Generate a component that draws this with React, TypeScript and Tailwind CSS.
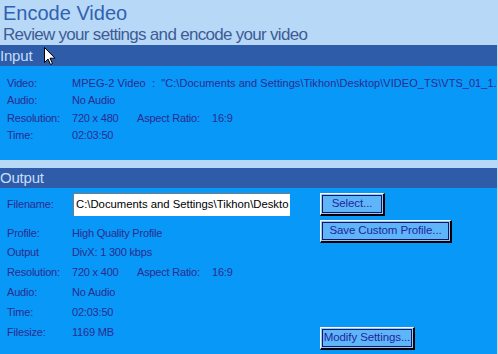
const FONT = { fontFamily: '"Liberation Sans", Arial, sans-serif' }

function Row({ label, value, extra }: { label: string; value: string; extra?: [string, string] }) {
  return (
    <div className="flex h-[19.8px] items-center whitespace-nowrap text-[11px] tracking-[-0.2px] text-[#2b2b8f]">
      <span className="w-[72px] shrink-0 pl-[7px]">{label}</span>
      <span className={extra ? 'w-[65px] shrink-0' : ''}>{value}</span>
      {extra && (
        <>
          <span className="w-[75px] shrink-0">{extra[0]}</span>
          <span>{extra[1]}</span>
        </>
      )}
    </div>
  )
}

function InRow({ label, value, extra, wide }: { label: string; value: string; extra?: [string, string]; wide?: boolean }) {
  return (
    <div className="flex h-[17.5px] items-center whitespace-pre text-[11px] tracking-[-0.2px] text-[#2b2b8f]">
      <span className="w-[72px] shrink-0 pl-[7px]">{label}</span>
      <span className={extra ? 'w-[65px] shrink-0' : wide ? 'tracking-[0.05px]' : ''}>{value}</span>
      {extra && (
        <>
          <span className="w-[75px] shrink-0">{extra[0]}</span>
          <span>{extra[1]}</span>
        </>
      )}
    </div>
  )
}

function Btn({ label, w }: { label: string; w: string }) {
  return (
    <div className={`${w} h-[23px] border-t border-l border-r-2 border-b-2 border-t-white border-l-white border-r-black border-b-black bg-[#8ccaf8] p-[1px]`}>
      <div className="flex h-full items-center justify-center border border-[#14146a] bg-[#5eb6f8] text-[11.5px] tracking-[-0.1px] text-[#2424a0]">
        {label}
      </div>
    </div>
  )
}

export default function App() {
  return (
    <div style={FONT} className="relative h-[354px] w-[498px] overflow-hidden bg-[#b8d8f8]">
      {/* Title */}
      <div className="h-[45px] pl-[3px] pt-[1px]">
        <div className="text-[20px] leading-[24px] text-[#3062b0]">Encode Video</div>
        <div className="text-[17px] leading-[19px] tracking-[-0.7px] text-[#3e5c94]">
          Review your settings and encode your video
        </div>
      </div>

      {/* Input */}
      <div className="w-[497px]">
        <div className="h-[21px] bg-[#2e5ca8] text-[15px] leading-[21px] tracking-[-0.2px] text-[#c4defc]">Input</div>
        <div className="h-[94px] overflow-hidden bg-[#0898f8] pt-[8px]">
          <InRow wide label="Video:" value={'MPEG-2 Video  :  "C:\\Documents and Settings\\Tikhon\\Desktop\\VIDEO_TS\\VTS_01_1.vob'} />
          <InRow label="Audio:" value="No Audio" />
          <InRow label="Resolution:" value="720 x 480" extra={['Aspect Ratio:', '16:9']} />
          <InRow label="Time:" value="02:03:50" />
        </div>
      </div>

      <div className="h-[8px]" />

      {/* Output */}
      <div className="w-[497px]">
        <div className="h-[20px] bg-[#2e5ca8] text-[15px] leading-[20px] tracking-[-0.2px] text-[#c4defc]">Output</div>
        <div className="flex h-[166px] bg-[#0898f8] pt-[5px]">
          <div className="w-[320px] shrink-0">
            <div className="flex h-[23px] items-center text-[11px] tracking-[-0.2px] text-[#2b2b8f]">
              <span className="w-[73px] shrink-0 pl-[7px]">Filename:</span>
              <div className="h-[23px] w-[217px] overflow-hidden whitespace-nowrap border-t border-l border-t-[#7a7a7a] border-l-[#7a7a7a] bg-white pl-[2px] text-[11.3px] leading-[21px] tracking-[0px] text-black">
                C:\Documents and Settings\Tikhon\Deskto
              </div>
            </div>
            <div className="mt-[7px]">
              <Row label="Profile:" value="High Quality Profile" />
              <Row label="Output" value="DivX: 1 300 kbps" />
              <Row label="Resolution:" value="720 x 400" extra={['Aspect Ratio:', '16:9']} />
              <Row label="Audio:" value="No Audio" />
              <Row label="Time:" value="02:03:50" />
              <Row label="Filesize:" value="1169 MB" />
            </div>
          </div>
          <div className="flex flex-col">
            <Btn label="Select..." w="w-[65px]" />
            <div className="mt-[4px]">
              <Btn label="Save Custom Profile..." w="w-[132px]" />
            </div>
            <div className="mt-[84px]">
              <Btn label="Modify Settings..." w="w-[95px]" />
            </div>
          </div>
        </div>
      </div>

      {/* mouse pointer */}
      <svg className="absolute left-[44px] top-[47px]" width="12" height="19" viewBox="0 0 12 19">
        <path d="M0.5 0.5 L0.5 15.5 L4 12 L6.5 17.5 L8.5 16.5 L6 11.2 L11 11.2 Z" fill="white" stroke="black" strokeWidth="1" />
      </svg>
    </div>
  )
}
